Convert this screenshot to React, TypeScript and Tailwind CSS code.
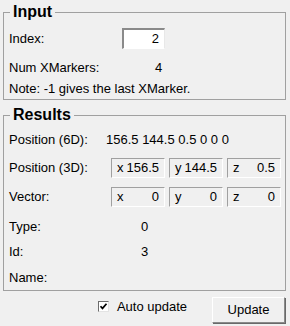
import React from 'react';

const sunken = 'border-t border-l border-t-[#a0a0a0] border-l-[#a0a0a0] border-b border-r border-b-white border-r-white';

function Row({ label, labelW, children, className = '' }: any) {
  return (
    <div className={`flex items-center h-[20px] ${className}`}>
      <span className="shrink-0" style={{ width: labelW }}>{label}</span>
      {children}
    </div>
  );
}

function VecBox({ axis, value }: { axis: string; value: string }) {
  return (
    <div className={`w-[54px] h-[20px] flex items-center justify-between px-[5px] bg-[#f0f0f0] ${sunken}`}>
      <span>{axis}</span>
      <span>{value}</span>
    </div>
  );
}

export default function App() {
  return (
    <div className="w-[290px] h-[326px] bg-[#f0f0f0] pl-[3px] pt-[3px] text-[13px] text-black font-['Liberation_Sans',Arial,sans-serif] overflow-hidden">
      {/* Input group */}
      <fieldset className="w-[283px] border border-[#a0a0a0]">
        <legend className="ml-[6px] px-[3px] text-[16px] font-bold leading-[18px]">Input</legend>
        <div className="pl-[5px] pb-[1px]">
          <div className="flex items-center h-[21px] mt-[7px]">
            <span className="w-[113px] shrink-0">Index:</span>
            <div className="w-[43px] h-[21px] bg-white border-t-2 border-l-2 border-t-[#8a8a8a] border-l-[#8a8a8a] border-b border-r border-b-white border-r-[#e8e8e8] flex items-center justify-end pr-[5px]">
              2
            </div>
          </div>
          <Row label="Num XMarkers:" labelW={146} className="mt-[9px]">
            <span>4</span>
          </Row>
          <div className="h-[18px] mt-[2px] flex items-center">Note: -1 gives the last XMarker.</div>
        </div>
      </fieldset>

      {/* Results group */}
      <fieldset className="w-[283px] border border-[#a0a0a0] mt-[6px]">
        <legend className="ml-[6px] px-[3px] text-[16px] font-bold leading-[18px]">Results</legend>
        <div className="pl-[5px] pb-[2px]">
          <Row label="Position (6D):" labelW={97} className="mt-[6px]">
            <span>156.5 144.5 0.5 0 0 0</span>
          </Row>
          <Row label="Position (3D):" labelW={102} className="mt-[8px]">
            <div className="flex gap-[4px]">
              <VecBox axis="x" value="156.5" />
              <VecBox axis="y" value="144.5" />
              <VecBox axis="z" value="0.5" />
            </div>
          </Row>
          <Row label="Vector:" labelW={102} className="mt-[9px]">
            <div className="flex gap-[4px]">
              <VecBox axis="x" value="0" />
              <VecBox axis="y" value="0" />
              <VecBox axis="z" value="0" />
            </div>
          </Row>
          <Row label="Type:" labelW={132} className="mt-[10px]">
            <span>0</span>
          </Row>
          <Row label="Id:" labelW={132} className="mt-[5px]">
            <span>3</span>
          </Row>
          <Row label="Name:" labelW={132} className="mt-[6px]" />
        </div>
      </fieldset>

      {/* Footer */}
      <div className="w-[282px] flex items-start justify-end mt-[6px]">
        <div className="flex items-center mt-[3px] h-[13px]">
          <div className={`w-[11px] h-[11px] bg-white flex items-center justify-center border-t border-l border-t-[#6d6d6d] border-l-[#6d6d6d] border-b border-r border-b-[#e3e3e3] border-r-[#e3e3e3]`}>
            <svg width="9" height="9" viewBox="0 0 9 9">
              <path d="M1.5 4.2 L3.5 6.4 L7.5 1.8" stroke="#000" strokeWidth="1.7" fill="none" />
            </svg>
          </div>
          <span className="ml-[8px]">Auto update</span>
        </div>
        <button className="ml-[25px] w-[73px] h-[26px] bg-[#f0f0f0] border-t border-l border-t-white border-l-white border-b border-r border-b-[#8a8a8a] border-r-[#8a8a8a] shadow-[1px_1px_0_#696969] flex items-center justify-center">
          Update
        </button>
      </div>
    </div>
  );
}
